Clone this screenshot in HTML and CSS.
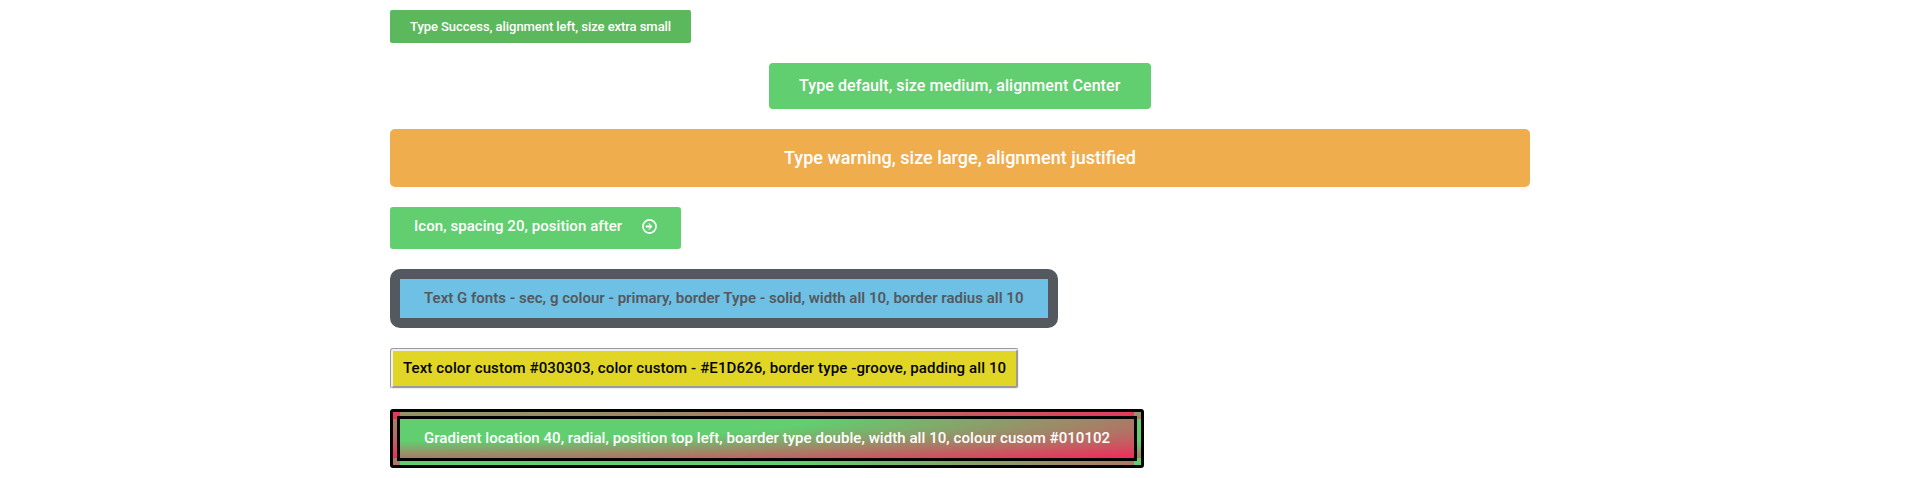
FILE: index.html
```
<!DOCTYPE html>
<html lang="en">
<head>
<meta charset="utf-8">
<title>Buttons</title>
<link rel="stylesheet" href="styles.css">
</head>
<body>
<main class="column">
<a class="button button-xs button-success">Type Success, alignment left, size extra small</a>
<a class="button button-md button-center">Type default, size medium, alignment Center</a>
<a class="button button-lg button-warning">Type warning, size large, alignment justified</a>
<a class="button button-icon"><span>Icon, spacing 20, position after</span><svg class="icon" viewBox="0 0 512 512" aria-hidden="true"><circle cx="256" cy="256" r="224" fill="none" stroke="currentColor" stroke-width="56"/><path fill="currentColor" d="M140 224h134l-50-50c-13-14 7-40 28-20l88 86q14 16 0 32l-88 86c-21 20-41-6-28-20l50-50H140q-12 0-12-12v-40q0-12 12-12z"/></svg></a>
<a class="button button-solid">Text G fonts - sec, g colour - primary, border Type - solid, width all 10, border radius all 10</a>
<a class="button button-groove">Text color custom #030303, color custom - #E1D626, border type -groove, padding all 10</a>
<a class="button button-gradient">Gradient location 40, radial, position top left, boarder type double, width all 10, colour cusom #010102</a>
</main>
</body>
</html>
```
FILE: styles.css
```
body {
  margin: 0;
  background: #fff;
}

.column {
  box-sizing: border-box;
  display: flex;
  flex-direction: column;
  align-items: flex-start;
  gap: 20px;
  width: 1140px;
  margin: 0 auto;
  padding-top: 10px;
}

.button {
  box-sizing: border-box;
  padding: 12px 24px;
  border-radius: 3px;
  background-color: #61ce70;
  color: #fff;
  font: 500 15px/1 Roboto, sans-serif;
  white-space: nowrap;
}

.button-xs {
  width: 301px;
  padding: 10px 20px;
  border-radius: 2px;
  font-size: 13px;
  letter-spacing: -0.06px;
}

.button-md {
  width: 382px;
  padding: 15px 30px;
  border-radius: 4px;
  font-size: 16px;
  letter-spacing: 0.08px;
}

.button-lg {
  padding: 20px 40px;
  border-radius: 5px;
  font-size: 18px;
  text-align: center;
  word-spacing: 0.1px;
}

.button-success {
  background-color: #5cb85c;
}

.button-center {
  align-self: center;
}

.button-warning {
  align-self: stretch;
  background-color: #f0ad4e;
}

.button-icon {
  display: flex;
  justify-content: space-between;
  align-items: flex-start;
  width: 291px;
  padding-bottom: 15px;
  letter-spacing: 0.06px;
}

.icon {
  width: 15px;
  height: 15px;
}

.button-solid {
  width: 668px;
  border: 10px solid #54595f;
  border-radius: 10px;
  background-color: #6ec1e4;
  color: #54595f;
  font-weight: 600;
  letter-spacing: 0.01px;
}

.button-groove {
  width: 629px;
  padding: 10px;
  border: 3px groove #efefef;
  background-color: #e1d626;
  color: #030303;
  letter-spacing: 0.115px;
}

.button-gradient {
  width: 754px;
  border: 10px double #010102;
  background-color: transparent;
  background-image: radial-gradient(at top left, #61ce70 40%, #f2295b 100%);
  letter-spacing: 0.06px;
}
```
